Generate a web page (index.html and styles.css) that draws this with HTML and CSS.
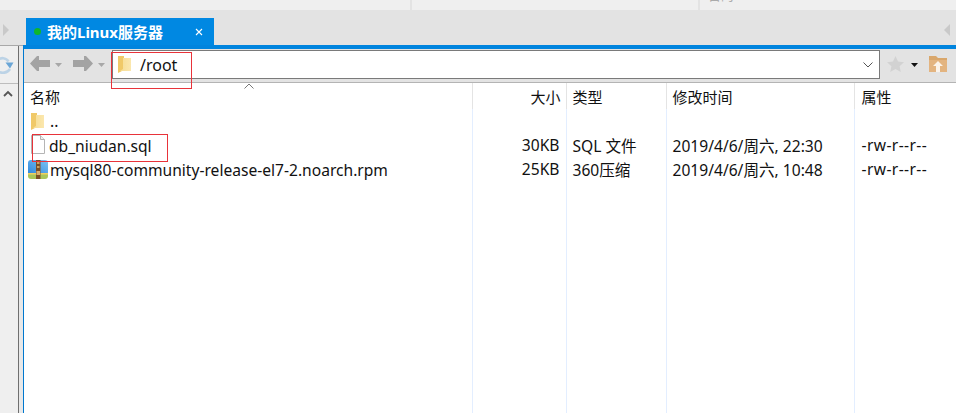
FILE: index.html
```html
<!DOCTYPE html>
<html lang="zh-CN">
<head>
<meta charset="utf-8">
<title>我的Linux服务器</title>
<link rel="stylesheet" href="styles.css">
</head>
<body>
<div class="app">
  <div class="topstrip">
    <div class="strip-cell strip-a"></div>
    <div class="strip-cell strip-b"><span class="clipped">1037</span></div>
    <div class="strip-cell strip-c"><span class="clipped">日的</span></div>
  </div>
  <div class="tabbar">
    <svg class="tab-scroll" width="8" height="14" viewBox="0 0 8 14"><path d="M1 1l6 6-6 6z" fill="#c9c9c9"/></svg>
    <div class="tab">
      <span class="dot"></span>
      <span class="tab-title">我的Linux服务器</span>
      <svg class="tab-close" width="8" height="8" viewBox="0 0 8 8"><path d="M1 1l6 6M7 1L1 7" stroke="#fff" stroke-width="1.1" fill="none"/></svg>
    </div>
    <svg class="tab-scroll tab-scroll-right" width="8" height="14" viewBox="0 0 8 14"><path d="M7 1L1 7l6 6z" fill="#c9c9c9"/></svg>
  </div>
  <div class="body">
    <aside class="side">
      <div class="side-tools">
        <svg width="14" height="22" viewBox="0 0 14 22"><path d="M-3 5.500C1 2 6 2.500 8.500 6.500" fill="none" stroke="#bcd3e6" stroke-width="2.600"/><path d="M5.500 7.500l8 0-3.500 6z" fill="#6ba6d6"/><path d="M10 14c-2.500 4-8 5-13 2" fill="none" stroke="#bcd3e6" stroke-width="2.600"/></svg>
      </div>
      <div class="side-list">
        <svg width="10" height="7" viewBox="0 0 10 7"><path d="M1 6l4-4 4 4" fill="none" stroke="#555" stroke-width="1.800"/></svg>
      </div>
    </aside>
    <main class="main">
      <div class="toolbar">
        <svg class="nav-arrow" width="20" height="15" viewBox="0 0 20 15"><path d="M0 7.500L7 0h2v4h11v7H9v4H7z" fill="#a3a3a3"/></svg>
        <svg class="mini-caret" width="7" height="4" viewBox="0 0 7 4"><path d="M0 0h7L3.500 4z" fill="#a8a8a8"/></svg>
        <svg class="nav-arrow nav-forward" width="20" height="15" viewBox="0 0 20 15"><path d="M20 7.500L13 0h-2v4H0v7h11v4h2z" fill="#a3a3a3"/></svg>
        <svg class="mini-caret" width="7" height="4" viewBox="0 0 7 4"><path d="M0 0h7L3.500 4z" fill="#a8a8a8"/></svg>
        <div class="address">
          <svg class="addr-folder" width="13" height="17" viewBox="0 0 13 17"><use href="#folder"/></svg>
          <span class="addr-text">/root</span>
          <svg class="addr-chevron" width="10" height="6" viewBox="0 0 10 6"><path d="M0.500 0.500L5 5 9.500 0.500" fill="none" stroke="#555" stroke-width="1"/></svg>
        </div>
        <svg class="star" width="17" height="16" viewBox="0 0 17 16"><path d="M8.500 0l2.500 5.500 6 .7-4.400 4 1.200 5.800-5.300-3-5.300 3 1.200-5.800L0 6.200l6-.7z" fill="#d2d2d2"/></svg>
        <svg class="black-caret" width="7" height="4" viewBox="0 0 7 4"><path d="M0 0h7L3.500 4z" fill="#111"/></svg>
        <svg class="home" width="18" height="16" viewBox="0 0 18 16"><path d="M0 0h7l2 2h9v14H0z" fill="#d9a76c"/><path d="M0 4h18v12H0z" fill="#e3b480"/><path d="M9 5l5 5h-3v6H7v-6H4z" fill="#fbf3ea"/></svg>
      </div>
      <table class="files">
        <colgroup>
          <col class="c-name"><col class="c-size"><col class="c-type"><col class="c-date"><col class="c-attr">
        </colgroup>
        <thead>
          <tr>
            <th class="name-head">名称<svg class="sort" width="10" height="6" viewBox="0 0 10 6"><path d="M0.500 5.500L5 1l4.500 4.500" fill="none" stroke="#777" stroke-width="1"/></svg></th>
            <th class="num">大小</th><th>类型</th><th>修改时间</th><th class="attr">属性</th>
          </tr>
        </thead>
        <tbody>
          <tr>
            <td class="name"><svg class="ic ic-folder" width="13" height="17" viewBox="0 0 13 17"><use href="#folder"/></svg><span class="up">..</span></td>
            <td></td><td></td><td></td><td></td>
          </tr>
          <tr>
            <td class="name"><svg class="ic ic-file" width="14" height="19" viewBox="0 0 14 19"><path d="M.5.500h9l4 4v14H.5z" fill="#fff" stroke="#b5b5b5"/><path d="M9.500.500v4h4" fill="#eee" stroke="#b5b5b5"/></svg><span>db_niudan.sql</span></td>
            <td class="num">30KB</td><td>SQL 文件</td><td>2019/4/6/周六, 22:30</td><td class="attr">-rw-r--r--</td>
          </tr>
          <tr>
            <td class="name"><svg class="ic ic-rar" width="20" height="19" viewBox="0 0 20 19"><defs><linearGradient id="rb" x1="0" y1="1" x2="1" y2="0"><stop offset="0" stop-color="#2f86dc"/><stop offset="1" stop-color="#7cc4f4"/></linearGradient></defs><path d="M0 3q0-3 3-3h14q3 0 3 3v11H0z" fill="url(#rb)"/><path d="M0 14h20v2q0 3-3 3H3q-3 0-3-3z" fill="#a9c55a"/><path d="M0 13h20v1.500H0z" fill="#f0d060"/><path d="M8 0h4.500v19H8z" fill="#7c4f24"/><path d="M9 2h2.500v2H9zm0 4h2.500v2H9z" fill="#c9a060"/><path d="M8.500 11h3.500v4H8.500z" fill="#d8b070"/></svg><span>mysql80-community-release-el7-2.noarch.rpm</span></td>
            <td class="num">25KB</td><td>360压缩</td><td>2019/4/6/周六, 10:48</td><td class="attr">-rw-r--r--</td>
          </tr>
          <tr class="filler"><td></td><td></td><td></td><td></td><td></td></tr>
        </tbody>
      </table>
    </main>
  </div>
  <div class="mark mark-path"></div>
  <div class="mark mark-file"></div>
</div>
<svg class="defs" width="0" height="0">
  <defs>
    <linearGradient id="fg" x1="0" y1="0" x2="1" y2="0"><stop offset="0" stop-color="#f6dd93"/><stop offset="1" stop-color="#fbe7ae"/></linearGradient>
    <symbol id="folder" viewBox="0 0 13 17"><path d="M0 0h6v14l-6 3z" fill="#f0c968"/><path d="M5 2h8v13H2l3-2z" fill="url(#fg)"/></symbol>
  </defs>
</svg>
</body>
</html>
```
FILE: styles.css
```css
* { box-sizing: border-box; }
html, body { margin: 0; padding: 0; height: 100%; overflow: hidden; }
body { background: #fff; font-family: "Noto Sans", "Noto Sans CJK SC", sans-serif; font-size: 15px; color: #111; }
.app { position: relative; width: 956px; height: 413px; display: flex; flex-direction: column; }
.defs { position: absolute; }

.topstrip { height: 10px; display: flex; background: #e3e3e3; gap: 2px; flex: none; }
.strip-cell { background: #efefef; overflow: hidden; position: relative; }
.strip-a { width: 410px; }
.strip-b { width: 286px; padding-left: 8px; }
.strip-c { flex: 1; padding-left: 8px; }
.clipped { display: block; margin-top: -13px; font-size: 13px; line-height: 16px; color: #aaa; }

.tabbar { height: 35px; flex: none; background: #e3e3e3; display: flex; align-items: flex-end; padding-left: 2px; }
.tab-scroll { margin-bottom: 8px; flex: none; }
.tab-scroll-right { margin-left: auto; margin-right: 5px; }
.tab { width: 188px; height: 27px; margin-left: 16px; background: #0088e2; color: #fff; display: flex; align-items: center; padding: 0 11px 0 8px; }
.dot { width: 7px; height: 7px; border-radius: 50%; background: #0fb62a; flex: none; }
.tab-title { margin-left: 6px; font-size: 15px; font-weight: 700; white-space: nowrap; }
.tab-close { margin-left: auto; flex: none; }

.body { flex: 1; min-height: 0; display: flex; }
.side { width: 23px; flex: none; display: flex; flex-direction: column; background: #efefef; border-top: 1px solid #a8a8a8; box-shadow: inset -4px 0 0 #e8e8e8, inset -5px 0 0 #6f6f6f; }
.side-tools { height: 38px; flex: none; padding-top: 9px; border-bottom: 1px solid #bdbdbd; margin-right: 5px; }
.side-tools svg { display: block; }
.side-list { flex: 1; padding: 6px 0 0 3px; margin-right: 5px; }
.side-list svg { display: block; }

.main { flex: 1; min-width: 0; display: flex; flex-direction: column; border-left: 1px solid #0078cf; border-top: 4px solid #0084de; }
.toolbar { height: 34px; flex: none; display: flex; align-items: flex-start; background: #e3e3e3; border-bottom: 1px solid #b4b4b4; padding: 1px 0 0 6px; }
.nav-arrow { margin-top: 6px; flex: none; }
.nav-forward { margin-left: 11px; }
.mini-caret { margin: 13px 0 0 5px; flex: none; }
.address { width: 768px; height: 29px; margin-left: 7px; flex: none; background: #fff; border: 1px solid #7a7a7a; display: flex; align-items: center; padding: 0 6px 0 5px; }
.addr-text { margin-left: 9px; font-size: 16px; color: #111; }
.addr-chevron { margin-left: auto; }
.star { margin: 6px 0 0 7px; flex: none; }
.black-caret { margin: 13px 0 0 7px; flex: none; }
.home { margin: 6px 0 0 11px; flex: none; }

.files { flex: 1; width: 932px; border-collapse: collapse; table-layout: fixed; }
.c-name { width: 448px; }
.c-size { width: 94px; }
.c-type { width: 100px; }
.c-date { width: 188px; }
th { height: 26px; padding: 0 0 0 6px; font-weight: 400; font-size: 15px; text-align: left; border-left: 1px solid #e4e4e4; white-space: nowrap; }
th:first-child, td:first-child { border-left: 0; }
td { height: 24px; padding: 0 0 0 6px; font-size: 15.6px; white-space: nowrap; border-left: 1px solid #e3eeff; vertical-align: middle; }
th.num { text-align: right; padding-right: 5px; }
td.num { text-align: right; padding-right: 6px; }
th.attr { padding-left: 7px; }
td.attr { padding-left: 7px; letter-spacing: 0.4px; }
.name-head { position: relative; }
td.name { padding-left: 4px; }
.name > span { vertical-align: middle; }
.sort { position: absolute; left: 220px; top: 0; }
.ic { vertical-align: middle; }
.ic-folder { margin: 0 6px 0 3px; }
.ic-file { margin: 0 4px 3px 3px; }
.ic-rar { margin-right: 2px; }
.up { position: relative; top: -1px; }
.filler td { height: auto; }

.mark { position: absolute; border: 1px solid #e8333a; }
.mark-path { left: 111px; top: 52px; width: 81px; height: 37px; }
.mark-file { left: 32px; top: 134px; width: 136px; height: 28px; }
```
